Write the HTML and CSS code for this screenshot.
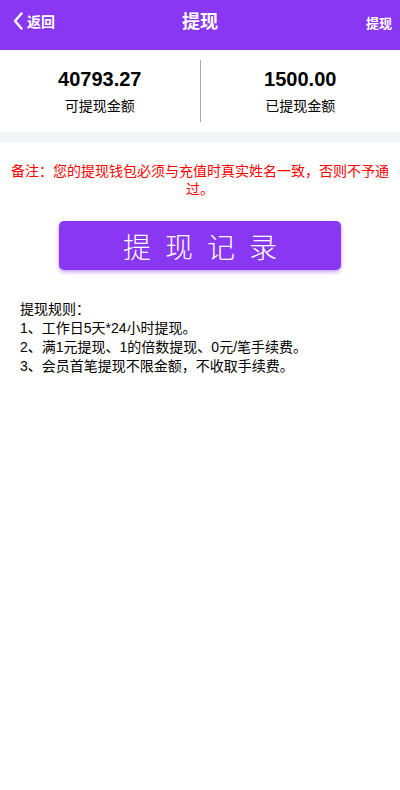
FILE: index.html
```html
<!DOCTYPE html>
<html lang="zh">
<head>
    <meta charset="UTF-8">
    <meta name="viewport" content="width=device-width, initial-scale=1.0">
    <title>提现</title>
    <link rel="stylesheet" href="styles.css">
</head>
<body>
    <!-- 顶部导航 -->
    <div class="header">
        <div class="back">
            <svg class="back-icon" viewBox="0 0 10 18" width="10" height="18">
                <path d="M8.5 1.5 L2 9 L8.5 16.5" fill="none" stroke="#fff" stroke-width="2.4" stroke-linecap="round" stroke-linejoin="round"/>
            </svg>
            <span>返回</span>
        </div>
        <div class="title">提现</div>
        <div class="right">提现</div>
    </div>

    <!-- 金额 -->
    <div class="stats">
        <div class="stat">
            <div class="num">40793.27</div>
            <div class="label">可提现金额</div>
        </div>
        <div class="divider"></div>
        <div class="stat">
            <div class="num">1500.00</div>
            <div class="label">已提现金额</div>
        </div>
    </div>
    <div class="gap"></div>

    <p class="note">备注：您的提现钱包必须与充值时真实姓名一致，否则不予通过。</p>

    <div class="btn-wrap">
        <button class="btn">提现记录</button>
    </div>

    <div class="rules">
        <p>提现规则：</p>
        <p>1、工作日5天*24小时提现。</p>
        <p>2、满1元提现、1的倍数提现、0元/笔手续费。</p>
        <p>3、会员首笔提现不限金额，不收取手续费。</p>
    </div>
</body>
</html>
```

FILE: styles.css
```css
* {
    margin: 0;
    padding: 0;
    box-sizing: border-box;
}

body {
    font-family: "Liberation Sans", Arial, "Noto Sans CJK SC", sans-serif;
    background: #fff;
    color: #000;
    width: 400px;
}

.header {
    height: 50px;
    background: #8a37f3;
    color: #fff;
    display: flex;
    align-items: center;
    justify-content: space-between;
    padding: 0 8px 0 13px;
    position: relative;
}

.back {
    display: flex;
    align-items: center;
    font-size: 14px;
    font-weight: bold;
    gap: 4px;
    transform: translateY(-4px);
}

.back-icon {
    display: block;
}

.title {
    position: absolute;
    left: 0;
    right: 0;
    top: 0;
    line-height: 44px;
    text-align: center;
    font-size: 18px;
    font-weight: bold;
    pointer-events: none;
}

.right {
    font-size: 13px;
    font-weight: bold;
    transform: translateY(-3px);
}

.stats {
    display: flex;
    align-items: center;
    height: 82px;
}

.stat {
    flex: 1;
    text-align: center;
}

.num {
    font-size: 20px;
    font-weight: bold;
    line-height: 24px;
}

.label {
    font-size: 14px;
    line-height: 18px;
    margin-top: 6px;
}

.divider {
    width: 1px;
    height: 62px;
    background: #aaa;
}

.gap {
    height: 10px;
    background: #f3f4f8;
}

.note {
    color: #ff0000;
    font-size: 14px;
    line-height: 18px;
    text-align: center;
    padding: 20px 10px 0;
}

.btn-wrap {
    display: flex;
    justify-content: center;
    padding-top: 23px;
}

.btn {
    width: 282px;
    height: 49px;
    background: #8a37f3;
    color: #fff;
    border: none;
    border-radius: 5px;
    box-shadow: 0 2px 4px rgba(138, 55, 243, 0.5);
    font-family: "Noto Sans CJK SC", sans-serif;
    font-size: 28px;
    font-weight: 300;
    letter-spacing: 14px;
    text-indent: 14px;
}

.rules {
    padding: 30px 20px 0;
    font-size: 14px;
    line-height: 19px;
}
```
